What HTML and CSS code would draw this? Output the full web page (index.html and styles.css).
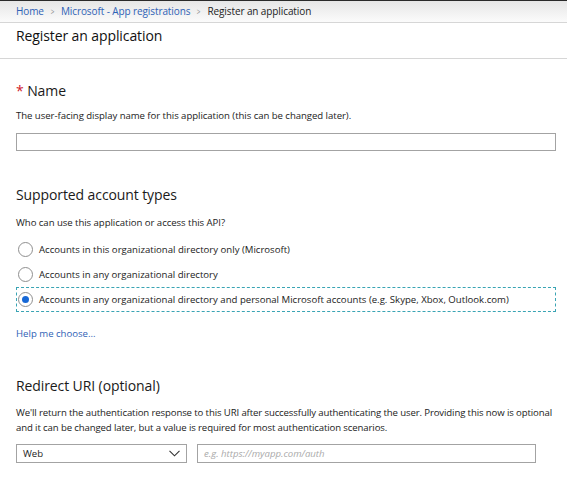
FILE: index.html
```html
<!DOCTYPE html>
<html>
<head>
<meta charset="utf-8">
<link rel="stylesheet" href="styles.css">
</head>
<body>
<div class="crumbs">
  <a class="crumb">Home</a><span class="sep">&gt;</span><a class="crumb">Microsoft - App registrations</a><span class="sep">&gt;</span><span class="current">Register an application</span>
</div>
<div class="titlebar"><h1>Register an application</h1></div>
<main class="content">
  <section class="sec name-sec">
    <h2><span class="req">*</span> Name</h2>
    <p class="desc">The user-facing display name for this application (this can be changed later).</p>
    <div class="textbox"></div>
  </section>
  <section class="sec acct-sec">
    <h2>Supported account types</h2>
    <p class="desc">Who can use this application or access this API?</p>
    <div class="radios">
      <div class="radio"><span class="circle"></span><span>Accounts in this organizational directory only (Microsoft)</span></div>
      <div class="radio"><span class="circle"></span><span>Accounts in any organizational directory</span></div>
      <div class="radio selected"><span class="circle"><span class="dot"></span></span><span>Accounts in any organizational directory and personal Microsoft accounts (e.g. Skype, Xbox, Outlook.com)</span></div>
    </div>
    <a class="help">Help me choose...</a>
  </section>
  <section class="sec uri-sec">
    <h2>Redirect URI (optional)</h2>
    <p class="desc para">We'll return the authentication response to this URI after successfully authenticating the user. Providing this now is optional and it can be changed later, but a value is required for most authentication scenarios.</p>
    <div class="uri-row">
      <div class="select"><span>Web</span><svg width="11" height="7" viewBox="0 0 11 7"><path d="M0.5 0.8 L5.5 5.8 L10.5 0.8" fill="none" stroke="#333" stroke-width="1.1"/></svg></div>
      <div class="uri-input">e.g. https://myapp.com/auth</div>
    </div>
  </section>
</main>
</body>
</html>
```
FILE: styles.css
```css
* { box-sizing: border-box; }
html, body { margin: 0; padding: 0; background: #fff; }
body {
  font-family: "Open Sans", "Noto Sans", sans-serif;
  color: #1a1a1a;
  width: 567px;
  height: 484px;
  overflow: hidden;
}
.crumbs {
  height: 23px;
  border-top: 1px solid #2a2a2a;
  border-bottom: 1px solid #d6d6d6;
  background: linear-gradient(#e6e6e6, #fbfbfb);
  display: flex;
  align-items: center;
  padding: 0 0 1px 16px;
  font-size: 10px;
  letter-spacing: -0.1px;
}
.crumb { color: #2f62b6; }
.sep { color: #8a8a8a; margin: 0 6px; font-size: 9px; transform: scaleX(0.7); display: inline-block; }
.current { color: #222; }
.titlebar {
  height: 36px;
  border-bottom: 1px solid #d6d6d6;
  padding: 3px 16px 0;
}
h1 {
  margin: 0;
  font-size: 14px;
  font-weight: 400;
  color: #111;
  letter-spacing: -0.1px;
}
.content { padding: 0 11px 0 16px; }
h2 {
  margin: 0;
  font-size: 14px;
  font-weight: 400;
  color: #1a1a1a;
  letter-spacing: -0.1px;
}
.req { color: #d0202a; }
.desc {
  margin: 0;
  font-size: 9.6px;
  color: #222;
  letter-spacing: -0.05px;
}
.name-sec { padding-top: 22px; }
.name-sec .desc { margin-top: 9px; }
.textbox {
  margin-top: 11px;
  height: 18px;
  border: 1px solid #a3a3a3;
}
.acct-sec { padding-top: 34px; }
.acct-sec .desc { margin-top: 12px; }
.radios { margin-top: 8px; display: flex; flex-direction: column; }
.radio {
  height: 25px;
  display: flex;
  align-items: center;
  gap: 6px;
  font-size: 9.6px;
  color: #222;
  padding-left: 1px;
  border: 1px dashed transparent;
}
.radio.selected { border-color: #3aa4b4; }
.circle {
  width: 15px;
  height: 15px;
  border: 1px solid #8f8f8f;
  border-radius: 50%;
  display: flex;
  align-items: center;
  justify-content: center;
  flex: none;
}
.dot { width: 7px; height: 7px; border-radius: 50%; background: #1668d6; }
.help {
  display: block;
  margin-top: 15px;
  font-size: 9.6px;
  color: #2f62b6;
}
.uri-sec { padding-top: 36px; }
.uri-sec .para { margin-top: 10px; line-height: 15px; margin-right: -6px; letter-spacing: -0.12px; }
.uri-row { display: flex; gap: 10px; margin-top: 9px; }
.select {
  width: 171px;
  height: 19px;
  border: 1px solid #a3a3a3;
  display: flex;
  align-items: center;
  justify-content: space-between;
  padding: 0 6px 0 6px;
  font-size: 9.6px;
  color: #222;
}
.uri-input {
  width: 339px;
  height: 19px;
  border: 1px solid #a3a3a3;
  display: flex;
  align-items: center;
  padding-left: 6px;
  font-size: 9.6px;
  font-style: italic;
  color: #aaa;
}
```
